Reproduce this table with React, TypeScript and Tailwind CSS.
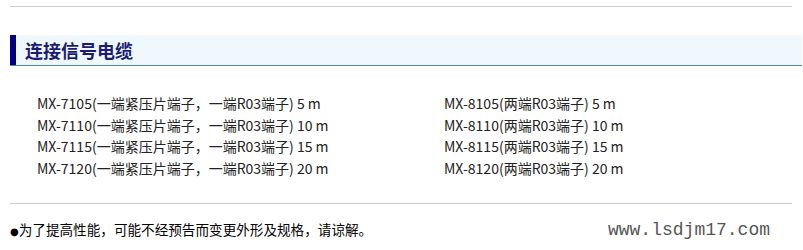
export default function App() {
  const left = [
    "MX-7105(一端紧压片端子，一端R03端子) 5 m",
    "MX-7110(一端紧压片端子，一端R03端子) 10 m",
    "MX-7115(一端紧压片端子，一端R03端子) 15 m",
    "MX-7120(一端紧压片端子，一端R03端子) 20 m",
  ];
  const right = [
    "MX-8105(两端R03端子) 5 m",
    "MX-8110(两端R03端子) 10 m",
    "MX-8115(两端R03端子) 15 m",
    "MX-8120(两端R03端子) 20 m",
  ];

  return (
    <div className="w-[803px] h-[250px] bg-white pl-[10px] pt-[6px] font-['Noto_Sans_CJK_SC',sans-serif] text-[#222]">
      {/* top rule */}
      <div className="w-[782px] h-px bg-[#cccccc]" />

      {/* section header */}
      <div className="mt-[28px] h-[31px] w-[792px] flex bg-[#eef8fd] border-b border-[#4a86c5]">
        <div className="w-[6px] bg-[#000080]" />
        <h2 className="pl-[9px] flex items-center text-[18px] font-bold text-[#1c1c74] leading-none">
          连接信号电缆
        </h2>
      </div>

      {/* cable list */}
      <div className="pt-[27px] pl-[27px] flex text-[14px] leading-[21.7px]">
        <div className="w-[407px] flex flex-col">
          {left.map((t) => (
            <div key={t}>{t}</div>
          ))}
        </div>
        <div className="flex flex-col">
          {right.map((t) => (
            <div key={t}>{t}</div>
          ))}
        </div>
      </div>

      {/* bottom rule */}
      <div className="mt-[23px] w-[782px] h-px bg-[#cccccc]" />

      {/* footnote */}
      <div className="mt-[15px] w-[782px] flex items-center justify-between">
        <p className="text-[13.6px] leading-[20px] text-black">
          <span className="font-['DejaVu_Sans',sans-serif] text-[10px]">●</span>
          为了提高性能，可能不经预告而变更外形及规格，请谅解。
        </p>
        <span className="mr-[22px] text-[18px] leading-[20px] text-[#555] font-['Liberation_Mono',monospace]">
          www.lsdjm17.com
        </span>
      </div>
    </div>
  );
}
